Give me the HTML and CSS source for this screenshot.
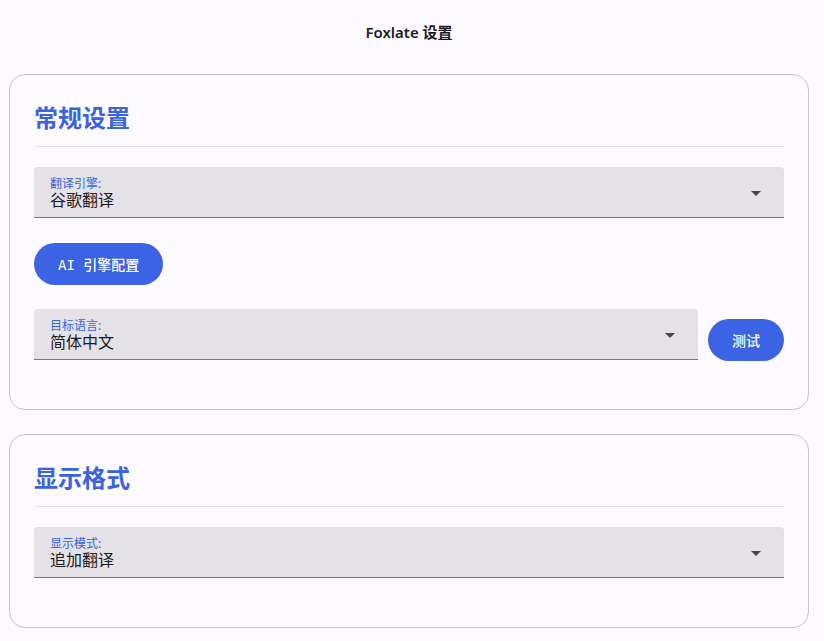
FILE: index.html
```html
<!DOCTYPE html>
<html lang="zh">
<head>
<meta charset="utf-8">
<title>Foxlate 设置</title>
<link rel="stylesheet" href="styles.css">
</head>
<body>
<div class="page">
  <h1 class="title">Foxlate 设置</h1>

  <section class="card">
    <h2 class="card-title">常规设置</h2>
    <div class="field">
      <div class="field-text">
        <span class="field-label">翻译引擎:</span>
        <span class="field-value">谷歌翻译</span>
      </div>
      <span class="arrow"></span>
    </div>
    <button class="btn btn-mono">AI 引擎配置</button>
    <div class="row">
      <div class="field field-grow">
        <div class="field-text">
          <span class="field-label">目标语言:</span>
          <span class="field-value">简体中文</span>
        </div>
        <span class="arrow"></span>
      </div>
      <button class="btn">测试</button>
    </div>
  </section>

  <section class="card">
    <h2 class="card-title">显示格式</h2>
    <div class="field">
      <div class="field-text">
        <span class="field-label">显示模式:</span>
        <span class="field-value">追加翻译</span>
      </div>
      <span class="arrow"></span>
    </div>
  </section>
</div>
</body>
</html>
```

FILE: styles.css
```css
html, body {
  margin: 0;
  padding: 0;
  background: #fdfbff;
}
body {
  font-family: "Noto Sans", "Noto Sans CJK SC", sans-serif;
  color: #1b1b1f;
}
.page {
  width: 800px;
  padding: 0 0 0 9px;
}
.title {
  margin: 0;
  height: 74px;
  box-sizing: border-box;
  padding-top: 21px;
  font-size: 15px;
  line-height: 22px;
  font-weight: 600;
  text-align: center;
  color: #1b1b1f;
}
.card {
  box-sizing: border-box;
  width: 800px;
  border: 1px solid #c6c5cd;
  border-radius: 16px;
  padding: 27px 24px 24px;
  margin-bottom: 24px;
  display: flex;
  flex-direction: column;
  align-items: flex-start;
}
.card-title {
  align-self: stretch;
  margin: 0 0 20px;
  padding-bottom: 12px;
  border-bottom: 1px solid #e2e1ea;
  font-size: 24px;
  line-height: 32px;
  font-weight: 700;
  color: #3b63e0;
}
.field {
  align-self: stretch;
  box-sizing: border-box;
  height: 51px;
  background: #e4e2e7;
  border-radius: 4px 4px 0 0;
  border-bottom: 1px solid #76757b;
  padding: 9px 23px 7px 16px;
  display: flex;
  align-items: center;
  justify-content: space-between;
  margin-bottom: 25px;
}
.field-text {
  display: flex;
  flex-direction: column;
  align-self: flex-start;
}
.field-label {
  font-size: 12px;
  line-height: 15px;
  color: #3b63e0;
}
.field-value {
  font-size: 16px;
  line-height: 18px;
  color: #1b1b1f;
}
.arrow {
  width: 0;
  height: 0;
  border-left: 5px solid transparent;
  border-right: 5px solid transparent;
  border-top: 5px solid #46464c;
  margin-top: 1px;
}
.btn {
  box-sizing: border-box;
  height: 42px;
  padding: 0 24px;
  border: none;
  border-radius: 21px;
  background: #3b63e3;
  color: #ffffff;
  font-family: "Noto Sans CJK SC", sans-serif;
  font-size: 14px;
  font-weight: 500;
  white-space: nowrap;
}
.btn-mono {
  font-family: "DejaVu Sans Mono", "Noto Sans CJK SC", monospace;
  margin-bottom: 24px;
}
.row {
  align-self: stretch;
  display: flex;
  align-items: flex-end;
  gap: 10px;
  margin-bottom: 25px;
}
.row .field {
  margin-bottom: 0;
  flex: 1;
}
.row .btn {
  margin-bottom: -1px;
}
```
